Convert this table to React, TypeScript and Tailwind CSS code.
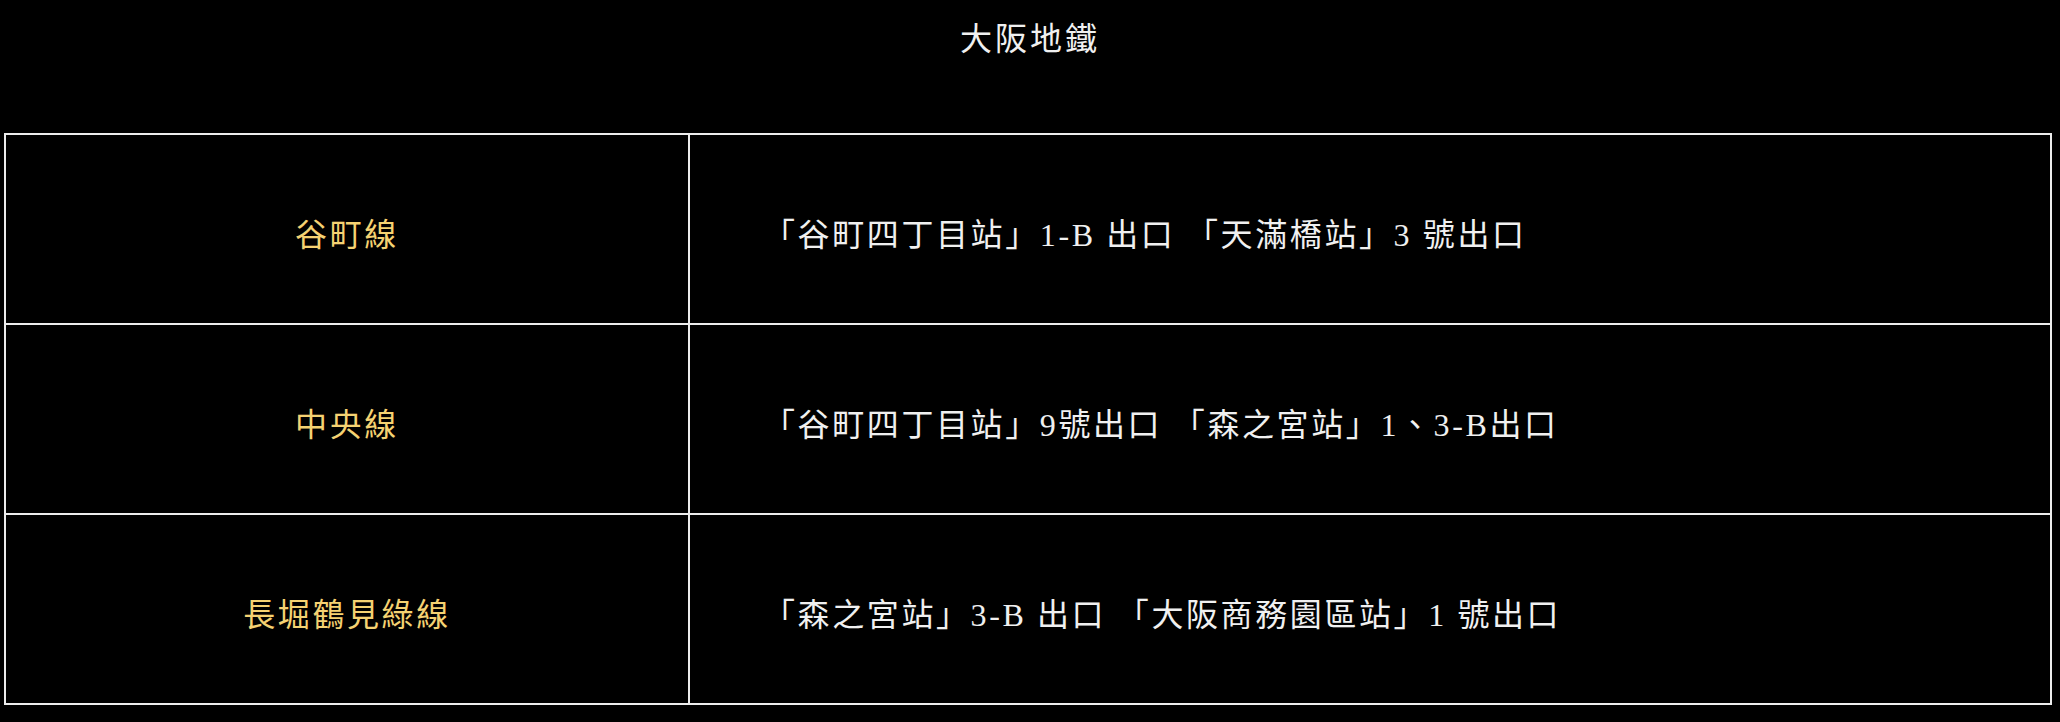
const rows = [
  {
    line: "谷町線",
    exits: "「谷町四丁目站」1-B 出口 「天滿橋站」3 號出口",
  },
  {
    line: "中央線",
    exits: "「谷町四丁目站」9號出口 「森之宮站」1、3-B出口",
  },
  {
    line: "長堀鶴見綠線",
    exits: "「森之宮站」3-B 出口 「大阪商務園區站」1 號出口",
  },
]

export default function App() {
  return (
    <div
      className="min-h-[722px] bg-black pr-2 pl-1 text-[32px] tracking-[2.6px] text-[#f0f0f0]"
      style={{ fontFamily: '"Liberation Serif", "Noto Sans CJK TC", serif' }}
    >
      <h1 className="pt-4 pl-1 text-center text-[32px] font-normal leading-[46px] tracking-[3px]">大阪地鐵</h1>

      <div className="mt-[71px] grid grid-cols-[684px_1fr] border-t-2 border-l-2 border-[#ececec]">
        {rows.map((row) => (
          <div key={row.line} className="contents">
            <div className="flex h-[190px] items-center justify-center border-r-2 border-b-2 border-[#ececec] pt-3 text-[#f5d272]">
              {row.line}
            </div>
            <div className="flex h-[190px] items-center border-r-2 border-b-2 border-[#ececec] pt-3 pl-[73px]">
              {row.exits}
            </div>
          </div>
        ))}
      </div>
    </div>
  )
}
